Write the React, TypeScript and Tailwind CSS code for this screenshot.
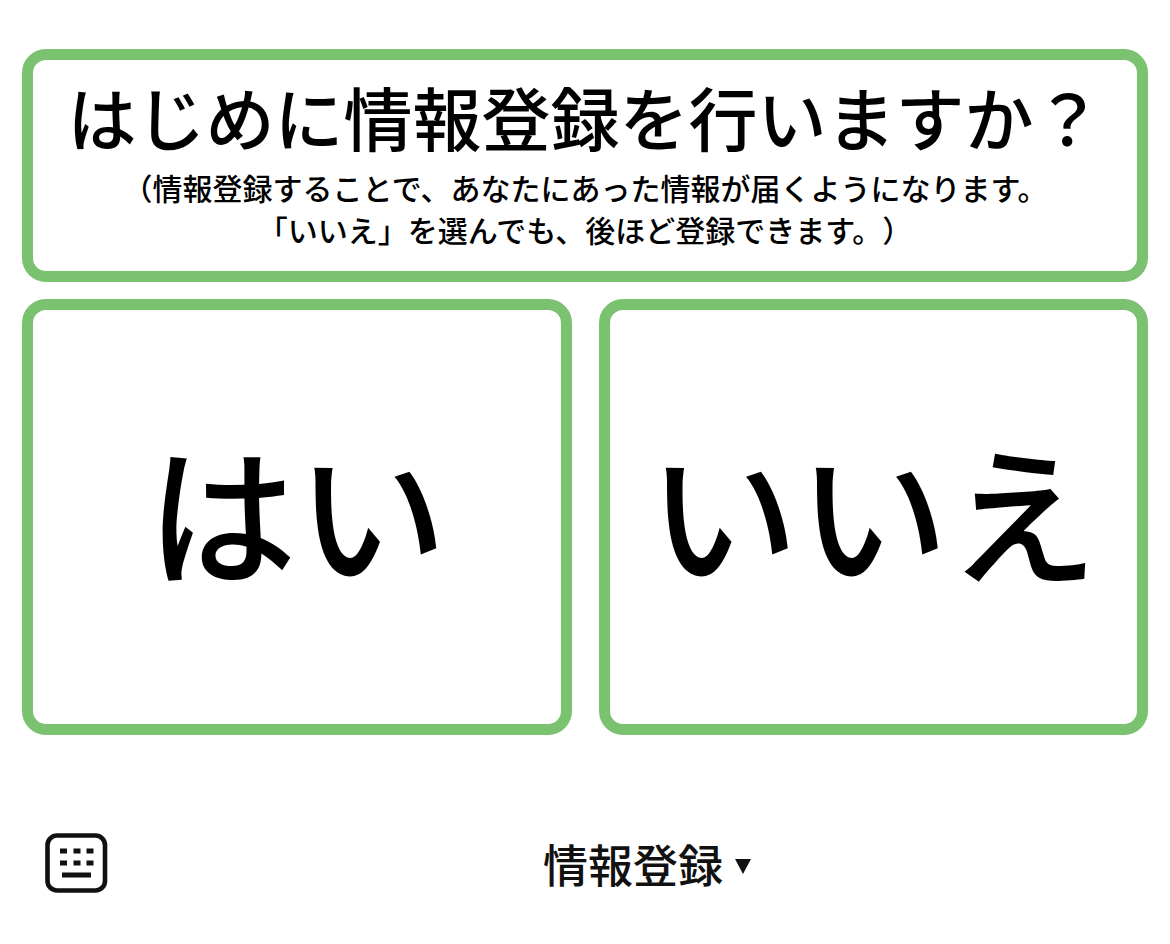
const answers = ["はい", "いいえ"];

function KeyboardIcon() {
  return (
    <svg viewBox="0 0 64 62" className="h-[62px] w-16" fill="none" stroke="#111111" aria-hidden>
      <rect x="3.5" y="3.5" width="57.5" height="55" rx="9.5" strokeWidth="4.6" />
      <path d="M16 19h7M29.5 19h7M42.5 19h7M16 31h7M29.5 31h7M42.5 31h7M18 43h29" strokeWidth="4.8" />
    </svg>
  );
}

export default function App() {
  return (
    <div className="min-h-screen bg-white font-['Noto_Sans_CJK_JP',sans-serif] font-medium text-black [text-spacing-trim:space-all]">
      <main className="px-[22px] pt-[49px]">
        <section className="rounded-3xl border-[11px] border-[#7ac270] pt-5 pb-[21px] text-center">
          <h1 className="text-[69px] leading-[72px]">はじめに情報登録を行いますか？</h1>
          <p className="mt-3.5 text-[30px] leading-[42px]">
            （情報登録することで、あなたにあった情報が届くようになります。
            <br />
            「いいえ」を選んでも、後ほど登録できます。）
          </p>
        </section>

        <div className="mt-[17px] grid grid-cols-2 gap-[27px]">
          {answers.map((label) => (
            <button
              key={label}
              type="button"
              className="h-[436px] rounded-3xl border-[11px] border-[#7ac270] pb-4 text-[150px] leading-[180px]"
            >
              {label}
            </button>
          ))}
        </div>
      </main>

      <footer className="mt-[97px] flex items-center gap-4 pl-11">
        <button type="button" aria-label="キーボード">
          <KeyboardIcon />
        </button>
        <button
          type="button"
          className="flex flex-1 items-center justify-center gap-3 pt-0.5 text-[45px] leading-[60px] text-[#111111]"
        >
          情報登録
          <svg viewBox="0 0 16 15" className="mt-1 h-[15px] w-4" fill="currentColor" aria-hidden>
            <path d="M0 0h16L8 15z" />
          </svg>
        </button>
      </footer>
    </div>
  );
}
